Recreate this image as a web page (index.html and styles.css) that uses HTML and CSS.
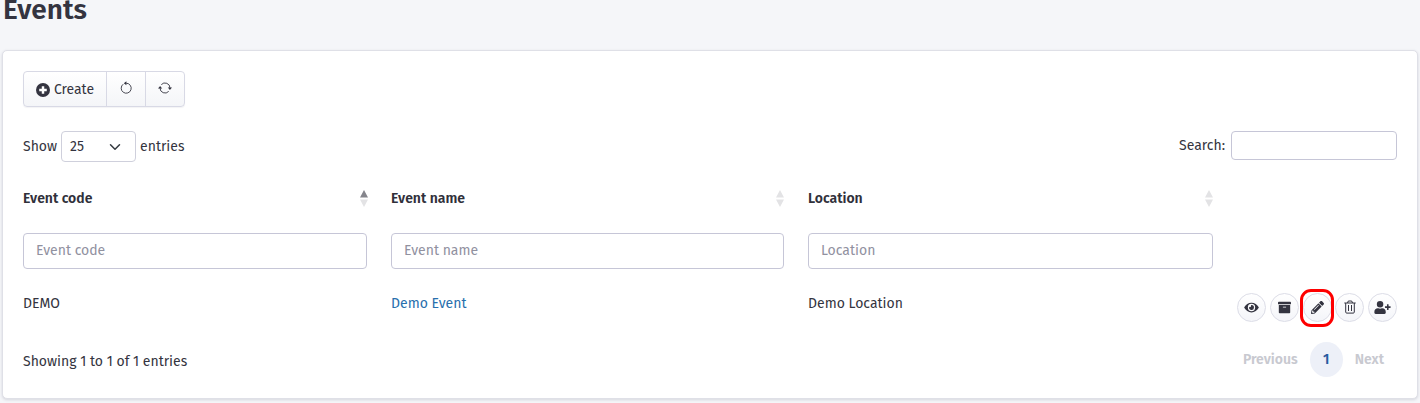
FILE: index.html
```html
<!DOCTYPE html>
<html lang="en">
<head>
<meta charset="utf-8">
<title>Events</title>
<link rel="stylesheet" href="styles.css">
</head>
<body>
<h1 class="title">Events</h1>
<main class="card">
  <div class="btn-group">
    <button class="btn btn-create"><svg width="14" height="14" viewBox="0 0 16 16"><circle cx="8" cy="8" r="8" fill="currentColor"/><path d="M8 3.700v8.600M3.700 8h8.600" stroke="#fff" stroke-width="2.800"/></svg><span>Create</span></button>
    <button class="btn" aria-label="Reset"><svg width="14" height="14" viewBox="0 0 14 14" fill="none" stroke="currentColor" stroke-width=".9"><path d="M4.200 3.200A5 5 0 1 0 7.200 2.200H6"/><path d="M7.400.2v4L4.800 2.200z" fill="currentColor" stroke="none"/></svg></button>
    <button class="btn" aria-label="Reload"><svg width="14" height="14" viewBox="0 0 14 14" fill="none" stroke="currentColor" stroke-width=".9"><path d="M3.300 3.600A5 5 0 0 1 12 7M10.700 10.400A5 5 0 0 1 2 7"/><path d="M9.800 6.400H14l-2.100 2.500zM0 7.600h4.200L2.100 5.100z" fill="currentColor" stroke="none"/></svg></button>
  </div>
  <div class="controls">
    <div class="length"><span>Show</span><span class="select"><span>25</span><svg width="12" height="12" viewBox="0 0 16 16" fill="none" stroke="#343a40" stroke-width="2" stroke-linecap="round" stroke-linejoin="round"><path d="m2 5 6 6 6-6"/></svg></span><span>entries</span></div>
    <label class="search"><span>Search:</span><input class="search-input" type="text"></label>
  </div>
  <div class="grid heads">
    <div class="th"><span>Event code</span><svg class="sort" width="8" height="17" viewBox="0 0 8 17"><path d="M4 0l4 7.500H0z" fill="#85858c"/><path d="M0 9.500h8L4 17z" fill="#e3e3e5"/></svg></div>
    <div class="th"><span>Event name</span><svg class="sort" width="8" height="17" viewBox="0 0 8 17"><path d="M4 0l4 7.500H0zM0 9.500h8L4 17z" fill="#e3e3e5"/></svg></div>
    <div class="th"><span>Location</span><svg class="sort" width="8" height="17" viewBox="0 0 8 17"><path d="M4 0l4 7.500H0zM0 9.500h8L4 17z" fill="#e3e3e5"/></svg></div>
  </div>
  <div class="grid filters">
    <div class="field">Event code</div>
    <div class="field">Event name</div>
    <div class="field">Location</div>
  </div>
  <div class="grid row">
    <span class="cell">DEMO</span>
    <a class="cell link">Demo Event</a>
    <span class="cell">Demo Location</span>
    <div class="actions">
      <button class="round" aria-label="View"><svg width="15" height="13" viewBox="0 0 576 512" fill="currentColor"><path d="M572.500 241.400C518.300 135.600 410.900 64 288 64S57.700 135.600 3.500 241.400a32.400 32.400 0 0 0 0 29.200C57.700 376.400 165.100 448 288 448s230.300-71.600 284.500-177.400a32.400 32.400 0 0 0 0-29.200zM288 400a144 144 0 1 1 144-144 144 144 0 0 1-144 144zm0-240a95 95 0 0 0-25 4 48 48 0 0 1-67 67 96 96 0 1 0 92-71z"/></svg></button>
      <button class="round" aria-label="Archive"><svg width="13" height="13" viewBox="0 0 512 512" fill="currentColor"><path d="M32 448c0 17.700 14.300 32 32 32h384c17.700 0 32-14.300 32-32V160H32zm160-212c0-7 5-12 12-12h104c7 0 12 5 12 12v8c0 7-5 12-12 12H204c-7 0-12-5-12-12zM480 32H32C14 32 0 46 0 64v64h512V64c0-18-14-32-32-32z"/></svg></button>
      <button class="round marked" aria-label="Edit"><svg width="13" height="13" viewBox="0 0 512 512" fill="currentColor"><path d="M498 142l-46 46c-5 5-13 5-17 0L324 77c-5-5-5-12 0-17l46-46c19-19 49-19 68 0l60 60c19 19 19 49 0 68zm-214-42L22 362 .300 484c-3 16 12 30 28 28l122-22 262-262c5-5 5-13 0-17L301 100c-4-5-12-5-17 0zM124 340c-5-6-5-14 0-20l154-154c6-5 14-5 20 0s5 14 0 20L144 340c-6 5-14 5-20 0zm-36 84h48v36l-64 12-32-31 12-65h36z"/></svg></button>
      <button class="round" aria-label="Delete"><svg width="12" height="14" viewBox="0 0 12 14" fill="none" stroke="currentColor"><path d="M.3 3h11.400M3.500 3l.8-2h3.400l.8 2M1.700 3v9c0 .7.400 1.100 1 1.100h6.600c.6 0 1-.4 1-1.100V3M4.500 5v6M7.500 5v6"/></svg></button>
      <button class="round" aria-label="Add user"><svg width="17" height="13" viewBox="0 0 640 512" fill="currentColor"><path d="M624 208h-64v-64c0-9-7-16-16-16h-32c-9 0-16 7-16 16v64h-64c-9 0-16 7-16 16v32c0 9 7 16 16 16h64v64c0 9 7 16 16 16h32c9 0 16-7 16-16v-64h64c9 0 16-7 16-16v-32c0-9-7-16-16-16zM224 256a128 128 0 1 0 0-256 128 128 0 0 0 0 256zm90 32h-17a174 174 0 0 1-146 0h-17C60 288 0 348 0 422v42c0 27 22 48 48 48h352c27 0 48-21 48-48v-42c0-74-60-134-134-134z"/></svg></button>
    </div>
  </div>
  <div class="footer">
    <span class="info">Showing 1 to 1 of 1 entries</span>
    <div class="pager"><span>Previous</span><span class="page">1</span><span>Next</span></div>
  </div>
</main>
</body>
</html>
```
FILE: styles.css
```css
* { box-sizing: border-box; }
body {
  margin: 0; height: 403px; overflow: hidden; background: #f5f6f9;
  font: 14px/20px "Fira Sans", "Noto Sans", sans-serif; color: #343440;
}
span, a { white-space: nowrap; }
svg { display: block; flex: none; }
.title { margin: -7px 0 0 3px; height: 57px; font-size: 28px; line-height: 34px; font-weight: 600; }
.card {
  margin: 0 2px; height: 349px; padding: 20px;
  background: #fff; border: 1px solid #dfe0e7; border-radius: 5px; box-shadow: 0 1px 3px rgba(50, 50, 80, .16);
}
.btn-group { display: flex; width: 162px; height: 36px; border: 1px solid #d8d9e5; border-radius: 4px; background: linear-gradient(#fff, #f4f5f8); box-shadow: 0 1px 1px rgba(50, 50, 80, .06); }
.btn { flex: none; width: 39px; padding: 0 0 2px; border: 0; border-left: 1px solid #d8d9e5; background: none; font: inherit; color: inherit; display: flex; align-items: center; justify-content: center; }
.btn-create { width: 82px; border-left: 0; padding: 1px 0 0; gap: 4px; }
.controls { display: flex; justify-content: space-between; align-items: flex-start; margin-top: 24px; height: 31px; }
.length { display: flex; align-items: center; gap: 4px; }
.select { width: 75px; height: 31px; padding: 0 14px 0 8px; border: 1px solid #cfd0dc; border-radius: 4px; display: flex; justify-content: space-between; align-items: center; }
.search { display: flex; align-items: center; gap: 6px; }
.search-input { width: 166px; height: 29px; border: 1px solid #c6c6d7; border-radius: 4px; background: #fff; }
.grid { display: grid; grid-template-columns: 344px 393px 405px 160px; column-gap: 24px; }
.heads { margin-top: 27px; height: 20px; font-weight: 600; color: #30303a; }
.th { display: flex; justify-content: space-between; align-items: center; }
.th .sort { margin-right: -1px; margin-bottom: 1px; }
.th + .th .sort { margin-right: 0; }
.filters { margin-top: 24px; }
.field { height: 36px; padding: 7px 12px; border: 1px solid #c6c6d7; border-radius: 4px; color: #91919f; }
.row { margin-top: 24px; height: 34px; }
.cell { padding-top: 1px; }
.link { color: #286fad; }
.actions { display: flex; justify-content: space-between; }
.round { position: relative; width: 29px; height: 29px; padding: 0 0 1px; border: 1px solid #dcdde7; border-radius: 50%; background: linear-gradient(#fff, #f4f5f9); color: #343440; display: flex; align-items: center; justify-content: center; }
.marked::after { content: ""; position: absolute; inset: -5px -3.5px -6px; border: 3px solid #fe0000; border-radius: 11px; }
.footer { display: flex; justify-content: space-between; margin-top: 15px; height: 35px; }
.info { margin-top: 10px; }
.pager { display: flex; align-items: center; gap: 12px; padding-right: 13px; font-weight: 600; color: #c8c9d0; }
.page { width: 33px; height: 35px; line-height: 35px; text-align: center; border-radius: 50%; background: #edf0f8; color: #285b9f; }
```
